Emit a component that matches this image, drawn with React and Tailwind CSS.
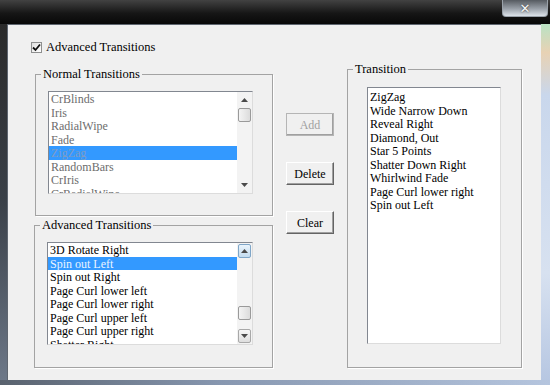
import React from "react";

const normalItems = ["CrBlinds", "Iris", "RadialWipe", "Fade", "ZigZag", "RandomBars", "CrIris", "CrRadialWipe"];
const advItems = ["3D Rotate Right", "Spin out Left", "Spin out Right", "Page Curl lower left", "Page Curl lower right", "Page Curl upper left", "Page Curl upper right", "Shatter Right"];
const transItems = ["ZigZag", "Wide Narrow Down", "Reveal Right", "Diamond, Out", "Star 5 Points", "Shatter Down Right", "Whirlwind Fade", "Page Curl lower right", "Spin out Left"];

function Tri({ down }) {
  return (
    <svg width="7" height="4" viewBox="0 0 7 4">
      {down ? <polygon points="0,0 7,0 3.5,4" fill="#4a4a4a" /> : <polygon points="3.5,0 7,4 0,4" fill="#4a4a4a" />}
    </svg>
  );
}

function Thumb() {
  return <div className="h-[14px] w-[13px] mx-auto rounded-[2px] border border-[#9a9a9a] bg-[linear-gradient(to_right,#f4f4f4,#dcdcdc)]" />;
}

function ArrowBtn({ down, blue }) {
  return (
    <div className={"h-[14px] w-[13px] mx-auto rounded-[2px] border flex items-center justify-center " + (blue ? "border-[#7fa6c8] bg-[linear-gradient(to_bottom,#eaf4fc,#c3dcf0)]" : "border-[#a8a8a8] bg-[linear-gradient(to_bottom,#f6f6f6,#dedede)]")}>
      <Tri down={down} />
    </div>
  );
}

function Fieldset({ label, className, children }) {
  return (
    <fieldset className={"border border-[#a3a3a3] shadow-[1px_1px_0_#ffffff] " + className}>
      <legend className="ml-[5px] px-[2px] leading-[14px] text-[12.5px] text-black">{label}</legend>
      {children}
    </fieldset>
  );
}

const row = "h-[13.5px] leading-[15px] pl-[2px] whitespace-nowrap";

export default function App() {
  return (
    <div className="w-[550px] h-[385px] flex flex-col overflow-hidden bg-[#1e1e1e] font-['Liberation_Serif','Times_New_Roman',serif] text-[12px] text-black">
      {/* title bar */}
      <div className="h-[24px] flex justify-end bg-[linear-gradient(to_bottom,#424242,#161616_55%,#080808)]">
        <div className="mr-[2px] h-[17px] w-[46px] rounded-b-[4px] border border-t-0 border-[#9aa2aa] bg-[linear-gradient(to_bottom,#555a60,#9aa1a9_55%,#dde3ea)] flex items-center justify-center">
          <span className="text-[13px] leading-none font-bold text-[#f4f4f4] font-['DejaVu_Sans',sans-serif] [text-shadow:0_0_2px_#222]">✕</span>
        </div>
      </div>
      <div className="flex flex-1">
        <div className="w-[7px] bg-[linear-gradient(to_bottom,#2a2a2a,#3a4048_50%,#6d7888)]" />
        {/* client area */}
        <div className="w-[534px] h-[356px] bg-[#f0f0f0] border-l border-t border-[#5f6670] flex flex-col">
          <div className="ml-[23px] mt-[16px] flex items-center gap-[4px] h-[13px]">
            <div className="w-[11px] h-[11px] border border-[#8e8f8f] bg-[linear-gradient(to_bottom_right,#e0e0e0,#ffffff)] flex items-center justify-center">
              <svg width="9" height="9" viewBox="0 0 9 9">
                <path d="M1 4.5 L3.5 7 L8 1.5" stroke="#111" strokeWidth="1.8" fill="none" />
              </svg>
            </div>
            <span className="text-[12.5px] leading-[13px]">Advanced Transitions</span>
          </div>
          <div className="flex items-start mt-[8px]">
            {/* left column */}
            <div className="ml-[27px] mt-[5px] flex flex-col gap-[2px] w-[238px]">
              <Fieldset label="Normal Transitions" className="h-[149px]">
                <div className="ml-[12px] mt-[10px] w-[205px] h-[103px] flex bg-white border border-t-[#828790] border-l-[#828790] border-r-[#dcdcdc] border-b-[#dcdcdc]">
                  <div className="w-[188px] overflow-hidden">
                    {normalItems.map((t, i) => (
                      <div key={t} className={row + " " + (i === 4 ? "bg-[#3399ff] text-[#7e9cc4]" : "text-[#6d6d6d]")}>{t}</div>
                    ))}
                  </div>
                  <div className="w-[15px] bg-[#f3f3f3] flex flex-col">
                    <div className="h-[16px] flex items-center justify-center"><Tri /></div>
                    <Thumb />
                    <div className="flex-1" />
                    <div className="h-[16px] flex items-center justify-center"><Tri down /></div>
                  </div>
                </div>
              </Fieldset>
              <Fieldset label="Advanced Transitions" className="h-[150px] -ml-[1px]">
                <div className="ml-[12px] mt-[10px] w-[206px] h-[103px] flex bg-white border border-t-[#828790] border-l-[#828790] border-r-[#dcdcdc] border-b-[#dcdcdc]">
                  <div className="w-[189px] overflow-hidden">
                    {advItems.map((t, i) => (
                      <div key={t} className={row + " " + (i === 1 ? "bg-[#3399ff] text-[#eaf4ff]" : "text-black")}>{t}</div>
                    ))}
                  </div>
                  <div className="w-[15px] bg-[#f3f3f3] flex flex-col pt-[1px] pb-[1px]">
                    <ArrowBtn blue />
                    <div className="flex-1" />
                    <Thumb />
                    <div className="h-[9px]" />
                    <ArrowBtn down />
                  </div>
                </div>
              </Fieldset>
            </div>
            {/* buttons */}
            <div className="ml-[13px] mt-[51px] flex flex-col gap-[26px]">
              {["Add", "Delete", "Clear"].map((b) => (
                <div key={b} className={"w-[48px] h-[23px] flex items-center justify-center bg-[#f0f0f0] border border-t-[#ffffff] border-l-[#ffffff] border-r-[#646464] border-b-[#646464] shadow-[inset_-1px_-1px_0_#a0a0a0] text-[12px] pt-[1px] " + (b === "Add" ? "text-[#a0a0a0] outline outline-1 outline-[#b5b5b5] -outline-offset-1" : "text-black")}>{b}</div>
              ))}
            </div>
            {/* transition group */}
            <Fieldset label="Transition" className="ml-[13px] w-[175px] h-[306px]">
              <div className="ml-[19px] mt-[11px] w-[134px] h-[257px] bg-white border border-t-[#828790] border-l-[#828790] border-r-[#dcdcdc] border-b-[#dcdcdc] pt-[2px] overflow-hidden">
                {transItems.map((t) => (
                  <div key={t} className={row}>{t}</div>
                ))}
              </div>
            </Fieldset>
          </div>
        </div>
        <div className="flex-1 bg-[linear-gradient(to_bottom,#b9e2c4,#e8d2b4_8%,#c9d7ec_20%,#d7e1f0_70%,#b7c7e2)]" />
      </div>
      <div className="h-[5px] bg-[linear-gradient(to_right,#59626e,#8797b0_40%,#b5c5de)]" />
    </div>
  );
}
